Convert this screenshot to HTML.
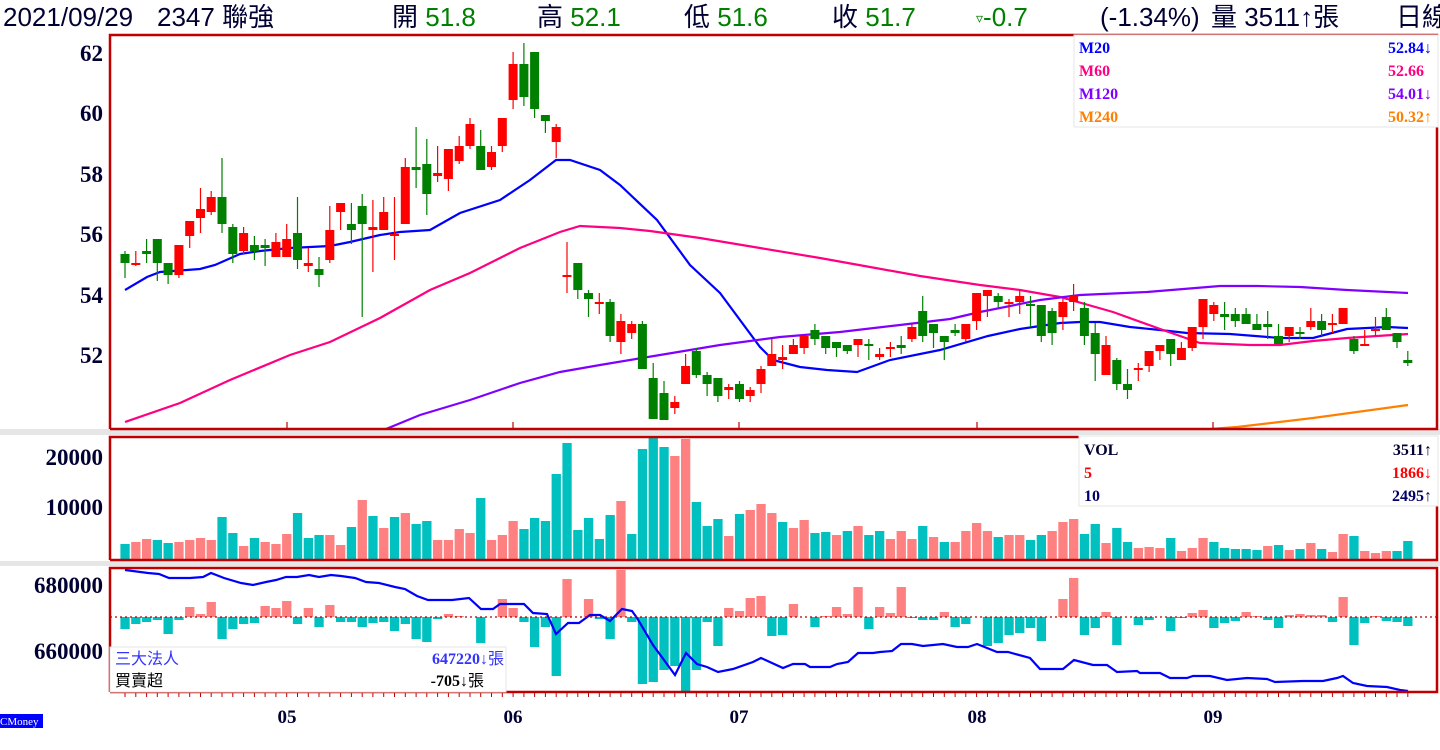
<!DOCTYPE html>
<html><head><meta charset="utf-8">
<style>
html,body{margin:0;padding:0;background:#fff;width:1440px;height:750px;overflow:hidden}
body{position:relative;font-family:"Liberation Sans","Noto Sans CJK TC",sans-serif}
.h{position:absolute;top:2px;font-size:26px;color:#000033;white-space:nowrap;line-height:30px}
.g{color:#008000}
svg{position:absolute;left:0;top:0}
</style></head><body>
<div class="h" style="left:3px">2021/09/29</div>
<div class="h" style="left:157px">2347 聯強</div>
<div class="h" style="left:392px">開 <span class="g">51.8</span></div>
<div class="h" style="left:537px">高 <span class="g">52.1</span></div>
<div class="h" style="left:684px">低 <span class="g">51.6</span></div>
<div class="h" style="left:832px">收 <span class="g">51.7</span></div>
<div class="h g" style="left:976px"><span style="font-size:14px;vertical-align:3px">▿</span>-0.7</div>
<div class="h" style="left:1100px">(-1.34%)</div>
<div class="h" style="left:1211px">量 3511↑張</div>
<div class="h" style="left:1396px">日線</div>
<svg id="s" width="1440" height="750" xmlns="http://www.w3.org/2000/svg" font-family="Liberation Serif, serif" font-weight="bold">
<rect x="0" y="429" width="1440" height="6" fill="#e6e6e6"/>
<rect x="0" y="561" width="1440" height="5" fill="#e6e6e6"/>
<g fill="#000033" font-size="23" text-anchor="end">
<text x="103" y="61">62</text><text x="103" y="121">60</text><text x="103" y="182">58</text><text x="103" y="242">56</text><text x="103" y="303">54</text><text x="103" y="363">52</text>
<text x="103" y="465">20000</text><text x="103" y="515">10000</text>
<text x="103" y="593">680000</text><text x="103" y="659">660000</text>
</g>
<g fill="#000033" font-size="19" text-anchor="middle">
<text x="287" y="723">05</text><text x="513" y="723">06</text><text x="739" y="723">07</text><text x="977" y="723">08</text><text x="1213" y="723">09</text>
</g>
<g id="dyn"></g>
<line x1="110" y1="617" x2="1437" y2="617" stroke="#b00000" stroke-width="1.2" stroke-dasharray="2,3"/>
<g fill="none" stroke="#c00000" stroke-width="2.5">
<polyline points="110,429 110,35 1437,35 1437,429 110,429"/>
<polyline points="110,560 110,437 1437,437 1437,560 110,560"/>
<polyline points="110,692 110,568 1437,568 1437,692 110,692"/>
</g>
<rect x="1074" y="35" width="364" height="92" fill="#fff" stroke="#e6e6e6"/>
<g font-size="16">
<text x="1079" y="53" fill="#0000ff">M20</text><text x="1432" y="53" fill="#0000ff" text-anchor="end">52.84↓</text>
<text x="1079" y="76" fill="#ff0080">M60</text><text x="1424" y="76" fill="#ff0080" text-anchor="end">52.66</text>
<text x="1079" y="99" fill="#8000ff">M120</text><text x="1432" y="99" fill="#8000ff" text-anchor="end">54.01↓</text>
<text x="1079" y="122" fill="#ff8000">M240</text><text x="1432" y="122" fill="#ff8000" text-anchor="end">50.32↑</text>
</g>
<rect x="1079" y="436" width="359" height="70" fill="#fff" stroke="#e6e6e6"/>
<g font-size="16">
<text x="1084" y="455" fill="#000033">VOL</text><text x="1432" y="455" fill="#000033" text-anchor="end">3511↑</text>
<text x="1084" y="478" fill="#ff0000">5</text><text x="1432" y="478" fill="#ff0000" text-anchor="end">1866↓</text>
<text x="1084" y="501" fill="#000066">10</text><text x="1432" y="501" fill="#000066" text-anchor="end">2495↑</text>
</g>
<rect x="110" y="647" width="396" height="45" fill="#fff" stroke="#e6e6e6"/>
<g font-size="16" font-family="Liberation Sans, Noto Sans CJK TC, sans-serif" font-weight="normal">
<text x="115" y="664" fill="#3333ff">三大法人</text>
<text x="115" y="686" fill="#000">買賣超</text>
</g>
<g font-size="16" text-anchor="end">
<text x="504" y="664" fill="#3333ff">647220↓<tspan font-family="Noto Sans CJK TC,sans-serif" font-weight="normal">張</tspan></text>
<text x="484" y="686" fill="#000" text-anchor="end">-705↓<tspan font-family="Noto Sans CJK TC,sans-serif" font-weight="normal">張</tspan></text>
</g>
<rect x="0" y="714" width="43" height="14" fill="#0000ff"/>
<text x="0" y="725" fill="#fff" font-size="11" font-weight="normal" font-family="Liberation Serif,serif">CMoney</text>
</svg>
<script>
var C=[[254,263,251,278,'g'],[263,264,251,266,'r'],[251,254,239,263,'g'],[239,263,239,281,'g'],[263,275,263,284,'g'],[245,275,245,278,'r'],[221,236,221,248,'r'],[209,218,188,233,'r'],[197,212,191,215,'r'],[197,224,158,233,'g'],
[227,254,224,263,'g'],[233,251,227,254,'r'],[245,251,236,260,'g'],[245,248,239,266,'g'],[242,257,233,257,'r'],[239,257,224,257,'r'],[233,260,197,269,'g'],[263,266,248,272,'r'],[269,275,257,287,'g'],[230,260,206,263,'r'],
[203,212,203,230,'r'],[224,230,203,244,'g'],[206,224,194,317,'g'],[227,230,200,272,'r'],[212,230,197,230,'r'],[234,236,197,260,'r'],[167,224,158,224,'r'],[167,170,127,188,'g'],[164,194,139,215,'g'],[173,176,146,182,'r'],
[149,179,149,191,'r'],[146,161,136,164,'r'],[124,146,118,149,'r'],[146,170,130,170,'g'],[152,167,146,170,'r'],[118,146,118,152,'r'],[64,100,52,109,'r'],[64,97,43,106,'g'],[52,109,52,118,'g'],[115,121,115,133,'g'],
[127,142,124,158,'r'],[275,277,242,293,'r'],[263,290,263,299,'g'],[293,299,290,317,'g'],[302,304,293,314,'r'],[302,336,299,342,'g'],[321,342,314,354,'r'],[324,333,321,339,'r'],[324,369,321,369,'g'],[378,419,363,419,'g'],
[393,420,381,420,'g'],[402,408,396,414,'r'],[366,384,354,384,'r'],[351,375,348,378,'g'],[375,384,372,396,'g'],[378,396,378,402,'g'],[387,390,384,399,'r'],[384,399,381,402,'g'],[390,396,387,402,'r'],[369,384,366,393,'r'],
[354,366,339,366,'r'],[357,360,345,369,'r'],[345,354,339,354,'r'],[336,348,336,354,'r'],[330,339,324,345,'g'],[336,348,336,354,'g'],[342,348,342,357,'g'],[345,351,345,354,'g'],[339,345,339,357,'r'],[344,346,339,360,'g'],
[354,357,348,360,'r'],[347,349,342,357,'r'],[345,348,336,354,'g'],[327,339,324,342,'r'],[311,336,296,342,'g'],[324,333,324,348,'g'],[336,342,336,360,'g'],[330,333,324,336,'g'],[324,339,324,342,'r'],[293,321,293,330,'r'],
[290,296,290,317,'r'],[296,302,293,308,'g'],[302,304,299,317,'r'],[296,302,290,314,'r'],[304,306,296,327,'g'],[305,336,305,342,'g'],[311,333,308,345,'g'],[302,317,299,330,'r'],[296,302,284,311,'r'],[308,336,302,345,'g'],
[333,354,323,381,'g'],[345,375,336,375,'r'],[360,384,358,390,'g'],[384,390,369,399,'g'],[368,370,363,381,'r'],[351,366,351,372,'r'],[345,351,345,360,'r'],[339,354,339,366,'g'],[348,360,342,360,'r'],[327,348,327,351,'r'],
[299,327,299,339,'r'],[305,314,302,321,'r'],[314,317,302,330,'g'],[314,321,308,327,'g'],[314,324,308,324,'g'],[324,330,314,330,'g'],[324,327,311,339,'g'],[336,344,324,344,'g'],[327,336,327,342,'r'],[332,334,327,339,'g'],
[321,327,308,330,'r'],[321,330,314,336,'g'],[323,325,314,333,'r'],[308,324,308,324,'r'],[339,351,336,354,'g'],[344,346,330,346,'r'],[329,331,317,336,'r'],[317,330,308,330,'g'],[333,342,333,348,'g'],[360,363,351,366,'g']];
var V="544t542r539r540t543t542r540r538r540r517t533t546r538t542r544r534r513t538t535t535r545r527t500r516t528r517t513r524t521t540r540r529r533r498t540r535r521r529t518t521t474t443t530t518t539t515t501r534t449t438t447t456r439r502t526t519t536r514t510r504r513r522t528r520r533t532t535r531t526r535t531t539r531r539r526t537r542t542r531r523r531r537t535r535r540t535t531r522r519r534t524t543r528t542t548r547r548r538t551r548r538r542t548t549t549t550t546r545t550r549t543r549t552r534r536t551r553r551r551t541t";
var I=[-12,-7,-5,-3,-17,-3,10,3,15,-22,-12,-7,-6,11,9,16,-7,9,-10,12,-5,-5,-10,-6,-5,-14,-7,-22,-25,-2,3,1,0,-26,0,18,9,-5,-30,-10,-59,38,0,18,-2,-22,47,-5,-67,-65,-53,-49,-74,-53,-5,-29,9,6,19,21,-19,-18,13,0,-10,1,10,3,30,-12,10,4,30,-1,-3,-3,5,-10,-7,0,-29,-26,-18,-16,-11,-24,0,18,39,-18,-11,5,-28,0,-8,-3,0,-14,-1,4,7,-11,-6,-4,5,1,-3,-11,2,3,2,2,-5,20,-28,-6,1,-4,-5,-9];
var L={m20:["#0000ff","125,290 147,277 160,272 200,269 215,265 240,254 260,251 290,248 310,247 330,246 350,242 380,235 400,232 430,230 460,213 500,200 530,180 556,160 570,160 600,170 620,185 657,220 690,265 720,293 760,347 773,360 800,367 827,370 857,372 890,360 940,350 988,336 1020,329 1060,323 1080,322 1100,322 1130,327 1160,330 1187,333 1230,334 1280,338 1313,338 1347,329 1387,327 1408,328"],
m60:["#ff0080","125,422 180,403 230,380 290,355 330,342 380,318 430,290 470,273 520,248 560,232 580,226 620,228 650,231 700,238 760,248 820,258 870,267 920,276 980,285 1020,290 1060,297 1113,312 1163,330 1200,343 1250,345 1280,345 1313,341 1347,338 1408,334"],
m120:["#8000ff","386,429 420,415 470,400 520,383 560,372 600,365 660,355 720,345 780,337 840,332 900,325 950,319 980,312 1040,300 1080,295 1147,292 1220,286 1257,286 1300,287 1347,290 1408,293"],
m240:["#ff8000","1210,429 1237,427 1313,418 1408,405"],
inst:["#0000ff","125,570 148,573 159,574 169,578 190,578 203,577 211,573 224,578 241,583 253,585 266,582 276,580 286,577 297,577 309,575 319,577 331,575 341,576 355,578 366,582 379,583 395,587 405,589 417,596 428,600 452,600 469,598 481,609 493,609 500,604 524,604 533,613 547,614 556,634 568,623 579,623 590,615 600,615 610,621 622,609 632,611 637,618 653,645 675,675 686,653 697,664 707,667 718,672 733,669 753,662 761,658 783,668 793,664 805,664 810,667 830,667 837,664 848,662 858,653 873,653 880,652 892,651 901,644 912,644 923,646 943,644 957,647 968,647 977,644 987,648 997,652 1008,652 1030,658 1040,669 1063,669 1074,660 1093,665 1107,665 1117,672 1137,671 1140,673 1160,673 1170,678 1187,678 1193,676 1210,676 1227,680 1247,678 1267,679 1275,682 1303,681 1323,681 1337,678 1343,676 1353,683 1367,686 1387,687 1400,690 1408,691"]};
var h="";
function X(i){return 125+i*10.78;}
var re=/(\d+)([rt])/g,m,k=0;
while((m=re.exec(V))){var t=+m[1],x=X(k)-4.6;h+='<rect x="'+x.toFixed(1)+'" y="'+t+'" width="9.3" height="'+(559-t)+'" fill="'+(m[2]=='r'?'#ff8080':'#00c0c0')+'"/>';k++;}
for(var i=0;i<I.length;i++){var v=I[i];if(!v)continue;var x=X(i)-4.6;if(v>0)h+='<rect x="'+x.toFixed(1)+'" y="'+(617-v)+'" width="9.3" height="'+v+'" fill="#ff8080"/>';else h+='<rect x="'+x.toFixed(1)+'" y="617" width="9.3" height="'+(-v)+'" fill="#00c0c0"/>';}
for(var n in L){h+='<polyline fill="none" stroke="'+L[n][0]+'" stroke-width="2.2" points="'+L[n][1]+'"/>';}
for(var i=0;i<C.length;i++){var c=C[i],x=X(i),col=c[4]=='r'?'#ff0000':'#008000';
h+='<line x1="'+x.toFixed(1)+'" y1="'+c[2]+'" x2="'+x.toFixed(1)+'" y2="'+c[3]+'" stroke="'+col+'" stroke-width="1.2"/>';
h+='<rect x="'+(x-4.5).toFixed(1)+'" y="'+c[0]+'" width="9" height="'+Math.max(2,c[1]-c[0])+'" fill="'+col+'"/>';}
for(var i=0;i<120;i++){h+='<line x1="'+X(i).toFixed(1)+'" y1="693" x2="'+X(i).toFixed(1)+'" y2="697" stroke="#c00000" stroke-width="1"/>';}
[287,513,739,977,1213].forEach(function(x){h+='<line x1="'+x+'" y1="422" x2="'+x+'" y2="429" stroke="#c00000" stroke-width="1.2"/>';});
document.getElementById('dyn').innerHTML=h;
</script>
</body></html>
